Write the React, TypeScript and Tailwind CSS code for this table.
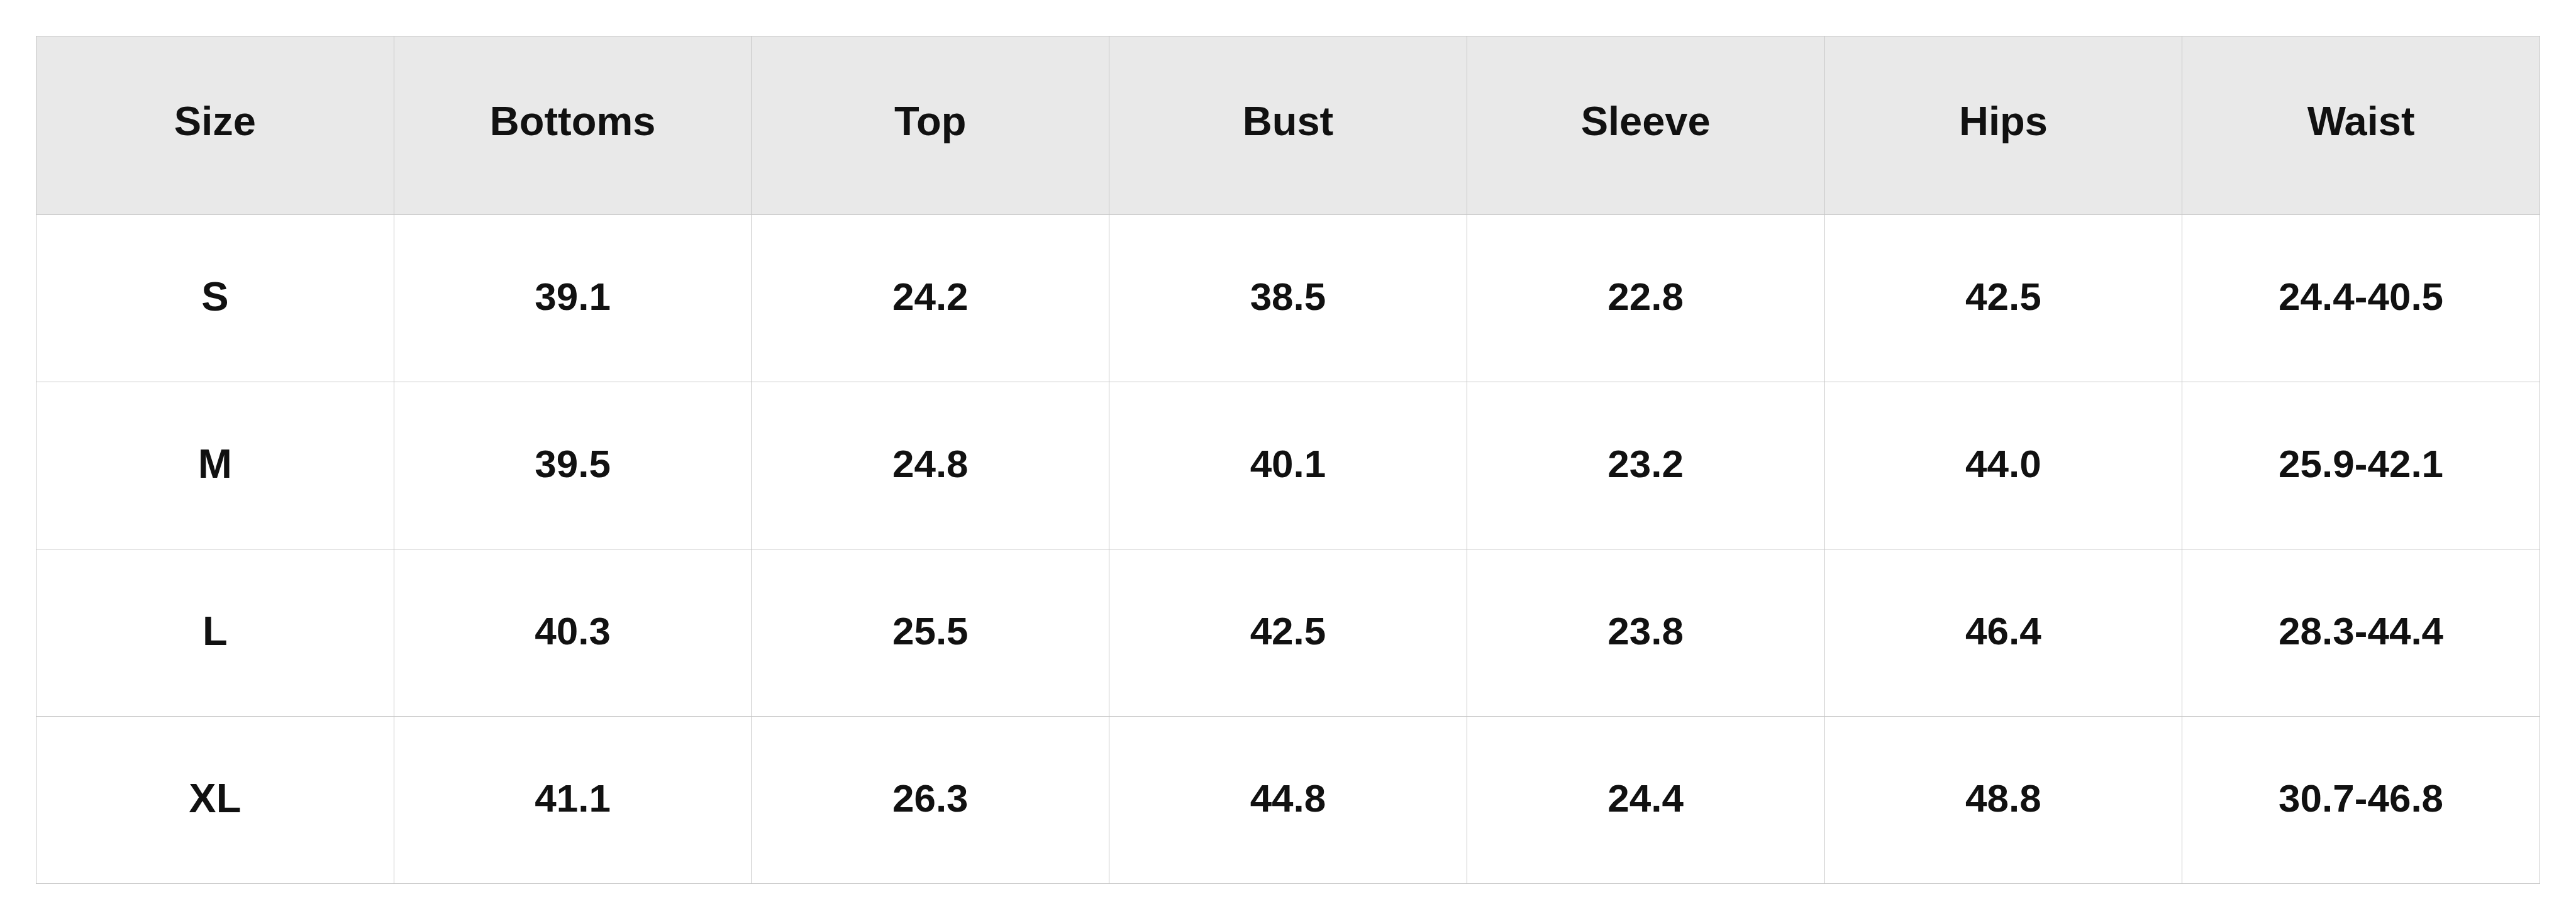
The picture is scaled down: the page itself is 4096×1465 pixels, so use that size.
const HEADERS = ["Size", "Bottoms", "Top", "Bust", "Sleeve", "Hips", "Waist"];

const ROWS = [
  ["S", "39.1", "24.2", "38.5", "22.8", "42.5", "24.4-40.5"],
  ["M", "39.5", "24.8", "40.1", "23.2", "44.0", "25.9-42.1"],
  ["L", "40.3", "25.5", "42.5", "23.8", "46.4", "28.3-44.4"],
  ["XL", "41.1", "26.3", "44.8", "24.4", "48.8", "30.7-46.8"],
];

export default function App() {
  return (
    <div className="w-full min-h-screen bg-white px-[57px] pt-[57px] font-['Liberation_Sans',Arial,sans-serif] text-[#111111]">
      <table className="w-full table-fixed border-collapse">
        <thead>
          <tr className="h-[284px] bg-[#e9e9e9]">
            {HEADERS.map((h) => (
              <th key={h} className="border border-[#c6c6c6] pb-[14px] text-center align-middle text-[65px] font-bold">
                {h}
              </th>
            ))}
          </tr>
        </thead>
        <tbody>
          {ROWS.map((row) => (
            <tr key={row[0]} className="h-[266px]">
              {row.map((cell, i) => (
                <td
                  key={i}
                  className={`border border-[#c6c6c6] pb-[6px] text-center align-middle font-bold ${i === 0 ? "text-[65px]" : "text-[62px]"}`}
                >
                  {cell}
                </td>
              ))}
            </tr>
          ))}
        </tbody>
      </table>
    </div>
  );
}
